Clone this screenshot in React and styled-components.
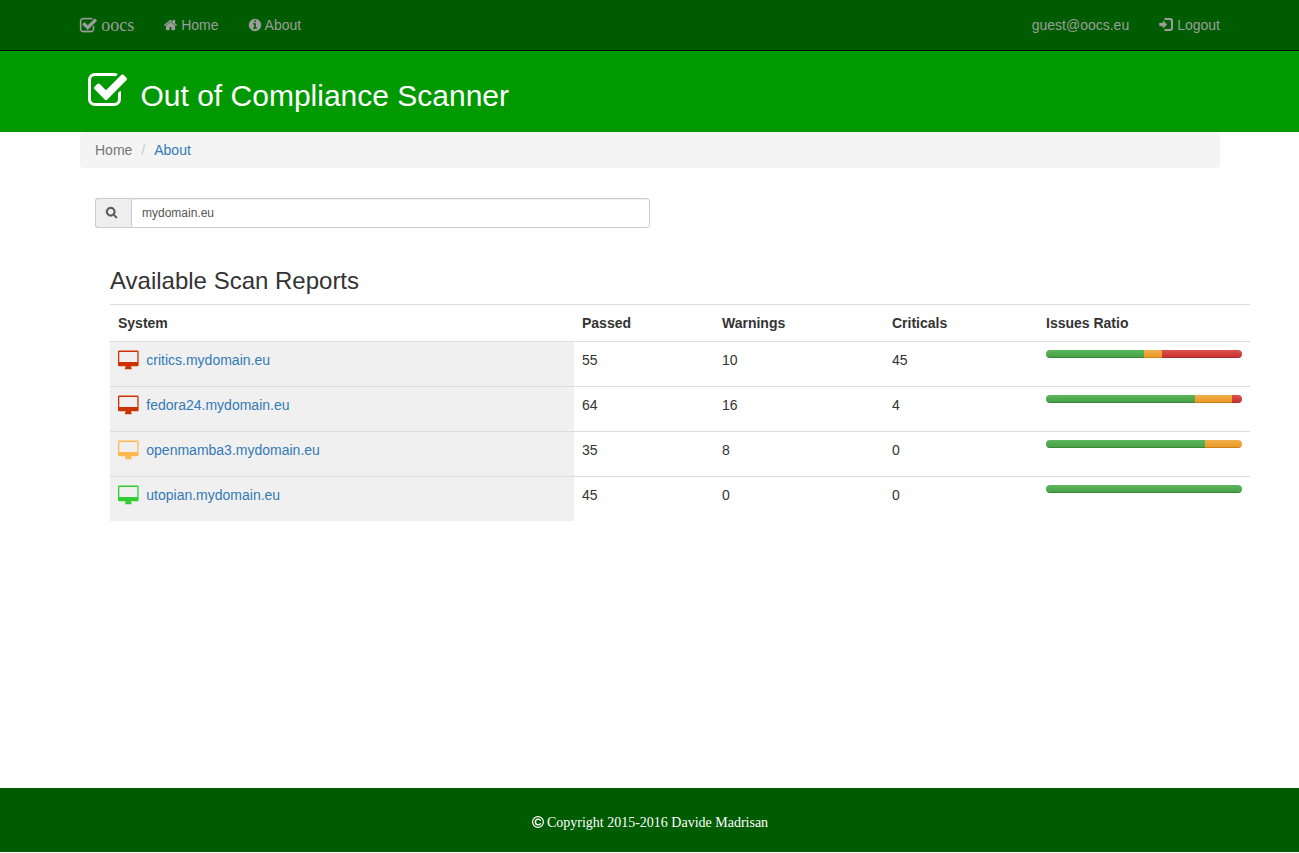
import React from 'react';
import styled, { createGlobalStyle } from 'styled-components';

const Global = createGlobalStyle`
  *, *::before, *::after { box-sizing: border-box; }
  body {
    margin: 0;
    background: #fff;
    color: #333;
    font-family: "Liberation Sans", Arial, sans-serif;
    font-size: 14px;
    line-height: 20px;
  }
`;

const Page = styled.div`
  display: flex;
  flex-direction: column;
  height: 852px;
  overflow: hidden;
`;
const Container = styled.div`
  width: 1140px;
  margin: 0 auto 0 80px;
`;
const Navbar = styled.nav`
  height: 51px;
  flex: none;
  background: #005c00;
  border-bottom: 1px solid #000;
`;
const NavInner = styled(Container)`
  display: flex;
  align-items: center;
  height: 50px;
  gap: 30px;
  color: #9d9d9d;
`;
const NavItem = styled.a`
  display: flex;
  align-items: center;
  gap: 4px;
  margin-left: ${p => (p.$push ? 'auto' : '0')};
`;
const Brand = styled(NavItem)`
  gap: 4.5px;
  font: 18px/20px "Liberation Serif", "Times New Roman", serif;
`;
const Banner = styled.header`
  flex: none;
  height: 81px;
  background: #009900;
  color: #fff;
`;
const BannerInner = styled(Container)`
  display: flex;
  align-items: flex-start;
  padding: 22px 0 0 7.5px;
`;
const Title = styled.h2`
  margin: 6px 0 0 14px;
  font-size: 30px;
  line-height: 33px;
  font-weight: 400;
`;
const Svg = styled.svg`
  display: block;
  flex: none;
  fill: currentColor;
`;
const Breadcrumb = styled.ol`
  display: flex;
  list-style: none;
  height: 36px;
  margin: 0;
  padding: 8px 15px;
  background: #f4f4f4;
  border-radius: 4px;
`;
const Crumb = styled.li`
  color: ${p => (p.$link ? '#337ab7' : '#777')};
  &:not(:first-child)::before {
    content: "/";
    color: #ccc;
    padding: 0 9px;
  }
`;
const SearchGroup = styled.div`
  display: flex;
  width: 555px;
  height: 30px;
  margin: 30px 0 0 15px;
`;
const Addon = styled.span`
  display: flex;
  align-items: center;
  width: 36px;
  padding-left: 10px;
  background: #eee;
  border: 1px solid #ccc;
  border-right: 0;
  border-radius: 3px 0 0 3px;
  color: #555;
`;
const SearchInput = styled.input`
  flex: 1;
  min-width: 0;
  height: 30px;
  padding: 5px 10px;
  border: 1px solid #ccc;
  border-radius: 0 3px 3px 0;
  box-shadow: inset 0 1px 1px rgba(0, 0, 0, .075);
  background: #fff;
  color: #555;
  font: 12px/18px "Liberation Sans", Arial, sans-serif;
  outline: 0;
`;
const Reports = styled.section`
  width: 1140px;
  margin: 40px 0 0 30px;
`;
const Heading = styled.h3`
  margin: 0 0 10px;
  font-size: 24px;
  line-height: 26px;
  font-weight: 400;
`;
const Row = styled.div`
  display: grid;
  grid-template-columns: 464px 140px 170px 154px 212px;
  height: ${p => (p.$head ? '37px' : '45px')};
  border-top: 1px solid #ddd;
  font-weight: ${p => (p.$head ? 700 : 400)};
`;
const Cell = styled.div`
  padding: 8px;
  line-height: 20px;
`;
const SystemCell = styled(Cell)`
  display: flex;
  align-items: flex-start;
  gap: 7.3px;
  background: #f0f0f0;
  color: #337ab7;
`;
const Monitor = styled(Svg)`
  color: ${p => p.$color};
`;
const Progress = styled.div`
  display: flex;
  width: 196px;
  height: 8px;
  overflow: hidden;
  border-radius: 4px;
  background: #f5f5f5;
`;
const tones = {
  ok: ['#5cb85c', '#449d44'],
  warn: ['#f0ad4e', '#ec971f'],
  bad: ['#d9534f', '#c9302c'],
};
const Bar = styled.div`
  background: linear-gradient(${p => tones[p.$tone].join(', ')});
  box-shadow: inset 0 -1px 0 rgba(0, 0, 0, .15);
`;
const Footer = styled.footer`
  display: flex;
  justify-content: center;
  align-items: flex-start;
  gap: 3px;
  flex: none;
  height: 64px;
  margin-top: auto;
  padding: 25px 0 0 1px;
  background: #005c00;
  color: #fff;
  font-family: "Liberation Serif", "Times New Roman", serif;
`;
const CopyrightMark = styled(Svg)`
  margin-top: -1px;
`;

const paths = {
  check: 'M1472 930v318q0 119-84.5 203.5t-203.5 84.5h-832q-119 0-203.5-84.5t-84.5-203.5v-832q0-119 84.5-203.5t203.5-84.5h832q63 0 117 25 15 7 18 23 3 17-9 29l-49 49q-10 10-23 10-3 0-9-2-23-6-45-6h-832q-66 0-113 47t-47 113v832q0 66 47 113t113 47h832q66 0 113-47t47-113v-254q0-13 9-22l64-64q10-10 23-10 6 0 12 3 20 8 20 29zm231-489l-814 814q-24 24-57 24t-57-24l-430-430q-24-24-24-57t24-57l110-110q24-24 57-24t57 24l263 263 647-647q24-24 57-24t57 24l110 110q24 24 24 57t-24 57z',
  home: 'M1472 992v480q0 26-19 45t-45 19h-384v-384h-256v384h-384q-26 0-45-19t-19-45v-480q0-1 .5-3t.5-3l575-474 575 474q1 2 1 6zm223-69l-62 74q-8 9-21 11h-3q-13 0-21-7l-692-577-692 577q-12 8-24 7-13-2-21-11l-62-74q-8-10-7-23.5t11-21.5l719-599q32-26 76-26t76 26l244 204v-195q0-14 9-23t23-9h192q14 0 23 9t9 23v408l219 182q10 8 11 21.5t-7 23.5z',
  info: 'M1152 1376v-160q0-14-9-23t-23-9h-96v-512q0-14-9-23t-23-9h-320q-14 0-23 9t-9 23v160q0 14 9 23t23 9h96v320h-96q-14 0-23 9t-9 23v160q0 14 9 23t23 9h448q14 0 23-9t9-23zm-128-896v-160q0-14-9-23t-23-9h-192q-14 0-23 9t-9 23v160q0 14 9 23t23 9h192q14 0 23-9t9-23zm640 416q0 209-103 385.5t-279.5 279.5-385.5 103-385.5-103-279.5-279.5-103-385.5 103-385.5 279.5-279.5 385.5-103 385.5 103 279.5 279.5 103 385.5z',
  search: 'M1216 832q0-185-131.5-316.5t-316.5-131.5-316.5 131.5-131.5 316.5 131.5 316.5 316.5 131.5 316.5-131.5 131.5-316.5zm512 832q0 52-38 90t-90 38q-54 0-90-38l-343-342q-179 124-399 124-143 0-273.5-55.5t-225-150-150-225-55.5-273.5 55.5-273.5 150-225 225-150 273.5-55.5 273.5 55.5 225 150 150 225 55.5 273.5q0 220-124 399l343 343q37 37 37 90z',
};

const boxes = {
  check: [64, 128, 1664, 1408],
  home: [64, 256, 1664, 1280],
  info: [128, 128, 1536, 1536],
  search: [64, 128, 1664, 1664],
};

// size is the em size of the glyph: 1792 units per em; weight thickens its strokes
function Icon({ name, size, weight = 0 }) {
  const [x, y, w, h] = boxes[name];
  return (
    <Svg viewBox={`${x} ${y} ${w} ${h}`} width={(w / 1792) * size} height={(h / 1792) * size} overflow="visible">
      <path d={paths[name]} stroke="currentColor" strokeWidth={weight} />
    </Svg>
  );
}

const systems = [
  { name: 'critics.mydomain.eu', color: '#cc3300', passed: 55, warnings: 10, criticals: 45 },
  { name: 'fedora24.mydomain.eu', color: '#cc3300', passed: 64, warnings: 16, criticals: 4 },
  { name: 'openmamba3.mydomain.eu', color: '#ffb84d', passed: 35, warnings: 8, criticals: 0 },
  { name: 'utopian.mydomain.eu', color: '#33cc33', passed: 45, warnings: 0, criticals: 0 },
];

function SystemRow({ s }) {
  const total = s.passed + s.warnings + s.criticals;
  const ok = Math.floor((s.passed / total) * 100);
  const bad = s.criticals ? Math.ceil((s.criticals / total) * 100) : 0;
  const warn = 100 - ok - bad;
  return (
    <Row>
      <SystemCell>
        <Monitor $color={s.color} viewBox="0 0 21 20" width="21" height="20">
          <path fillRule="evenodd" d="M1.2 .6H19.4Q20.6 .6 20.6 1.8V15Q20.6 16.2 19.4 16.2H13V17.6H13.6V19.2H7V17.6H7.6V16.2H1.2Q0 16.2 0 15V1.8Q0 .6 1.2 .6ZM1.3 2V12H19.3V2Z" />
        </Monitor>
        {s.name}
      </SystemCell>
      <Cell>{s.passed}</Cell>
      <Cell>{s.warnings}</Cell>
      <Cell>{s.criticals}</Cell>
      <Cell>
        <Progress>
          <Bar $tone="ok" style={{ width: `${ok}%` }} />
          <Bar $tone="warn" style={{ width: `${warn}%` }} />
          <Bar $tone="bad" style={{ width: `${bad}%` }} />
        </Progress>
      </Cell>
    </Row>
  );
}

export default function App() {
  return (
    <Page>
      <Global />
      <Navbar>
        <NavInner>
          <Brand><Icon name="check" size={18} weight={30} />oocs</Brand>
          <NavItem><Icon name="home" size={14} weight={30} />Home</NavItem>
          <NavItem><Icon name="info" size={14} weight={50} />About</NavItem>
          <NavItem $push>guest@oocs.eu</NavItem>
          <NavItem>
            <Svg viewBox="0 0 14 14" width="14" height="14">
              <path d="M5.5 0H11Q14 0 14 3V10Q14 13 11 13H5.5V11H10.5Q12 11 12 9.5V3.5Q12 2 10.5 2H5.5Z" />
              <path d="M.5 5H4V2.8L8 6.5L4 10.2V8H.5Z" stroke="currentColor" strokeWidth=".4" />
            </Svg>
            Logout
          </NavItem>
        </NavInner>
      </Navbar>
      <Banner>
        <BannerInner>
          <Icon name="check" size={42} />
          <Title>Out of Compliance Scanner</Title>
        </BannerInner>
      </Banner>
      <Container>
        <Breadcrumb>
          <Crumb>Home</Crumb>
          <Crumb $link>About</Crumb>
        </Breadcrumb>
        <SearchGroup>
          <Addon><Icon name="search" size={12} weight={50} /></Addon>
          <SearchInput defaultValue="mydomain.eu" />
        </SearchGroup>
        <Reports>
          <Heading>Available Scan Reports</Heading>
          <Row $head>
            <Cell>System</Cell>
            <Cell>Passed</Cell>
            <Cell>Warnings</Cell>
            <Cell>Criticals</Cell>
            <Cell>Issues Ratio</Cell>
          </Row>
          {systems.map(s => <SystemRow key={s.name} s={s} />)}
        </Reports>
      </Container>
      <Footer>
        <CopyrightMark viewBox="0 0 12 20" width="12" height="20">
          <circle cx="6" cy="10" r="5.4" fill="none" stroke="currentColor" strokeWidth="1.2" />
          <path d="M8.8 8.6Q8 7.1 6.1 7.1Q3.4 7.2 3.4 10T6.1 12.9Q8 12.9 8.8 11.4" fill="none" stroke="currentColor" strokeWidth="1.4" />
        </CopyrightMark>
        Copyright 2015-2016 Davide Madrisan
      </Footer>
    </Page>
  );
}
